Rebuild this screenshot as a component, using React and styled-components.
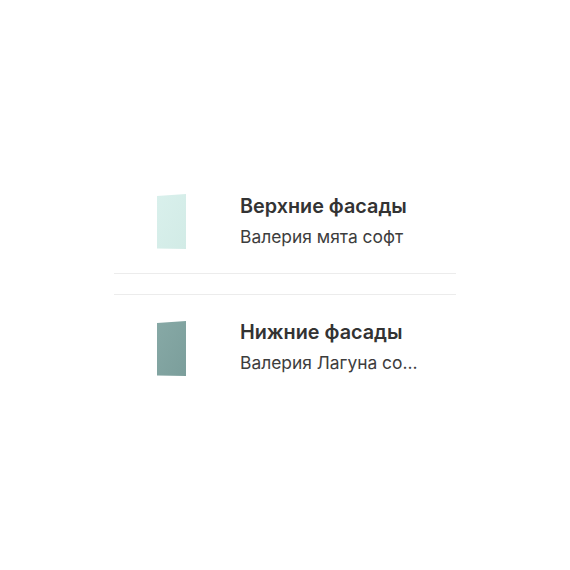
import React from "react";
import styled, { createGlobalStyle } from "styled-components";

const Global = createGlobalStyle`
  html, body { margin: 0; padding: 0; background: #ffffff; }
  body { font-family: Inter, "Noto Sans", sans-serif; }
`;

const Page = styled.div`
  width: 570px;
  height: 570px;
  display: flex;
  align-items: center;
  justify-content: center;
`;

const List = styled.div`
  width: 342px;
  display: flex;
  flex-direction: column;
  gap: 20px;
  margin-top: -3px;
`;

const Row = styled.div`
  display: flex;
  align-items: center;
  height: 106px;
  box-sizing: border-box;
  padding-left: 42px;
  border-top: ${(p) => (p.$top ? "1px solid #ececec" : "none")};
  border-bottom: ${(p) => (p.$bottom ? "1px solid #ececec" : "none")};
`;

const Thumb = styled.div`
  width: 32px;
  height: 56px;
  flex: none;
  display: flex;
  margin-top: 4px;
`;

const Info = styled.div`
  margin-left: 52px;
  display: flex;
  flex-direction: column;
  gap: 8px;
  min-width: 0;
  margin-top: ${(p) => (p.$top ? "0px" : "2px")};
`;

const Title = styled.div`
  font-size: 19.8px;
  font-weight: 600;
  color: #333333;
  line-height: 24px;
  white-space: nowrap;
`;

const Sub = styled.div`
  font-size: 17.4px;
  font-weight: 400;
  color: #3d3d3d;
  line-height: 22px;
  max-width: 180px;
  white-space: nowrap;
  overflow: hidden;
  text-overflow: ellipsis;
`;

const Panel = ({ from, to, id }) => (
  <svg width="32" height="56" viewBox="0 0 32 56">
    <defs>
      <linearGradient id={id} x1="0" y1="0" x2="1" y2="1">
        <stop offset="0" stopColor={from} />
        <stop offset="1" stopColor={to} />
      </linearGradient>
    </defs>
    <polygon points="1,2 30,0 30,55 1,54.5" fill={`url(#${id})`} />
  </svg>
);

const items = [
  { title: "Верхние фасады", sub: "Валерия мята софт", from: "#d9f0ec", to: "#d2ebe6", top: false, bottom: true },
  { title: "Нижние фасады", sub: "Валерия Лагуна софт", from: "#87a9a6", to: "#7b9e9b", top: true, bottom: false },
];

export default function App() {
  return (
    <>
      <Global />
      <Page>
        <List>
          {items.map((it, i) => (
            <Row key={i} $top={it.top} $bottom={it.bottom}>
              <Thumb>
                <Panel from={it.from} to={it.to} id={`g${i}`} />
              </Thumb>
              <Info $top={it.top}>
                <Title>{it.title}</Title>
                <Sub>{it.sub}</Sub>
              </Info>
            </Row>
          ))}
        </List>
      </Page>
    </>
  );
}
